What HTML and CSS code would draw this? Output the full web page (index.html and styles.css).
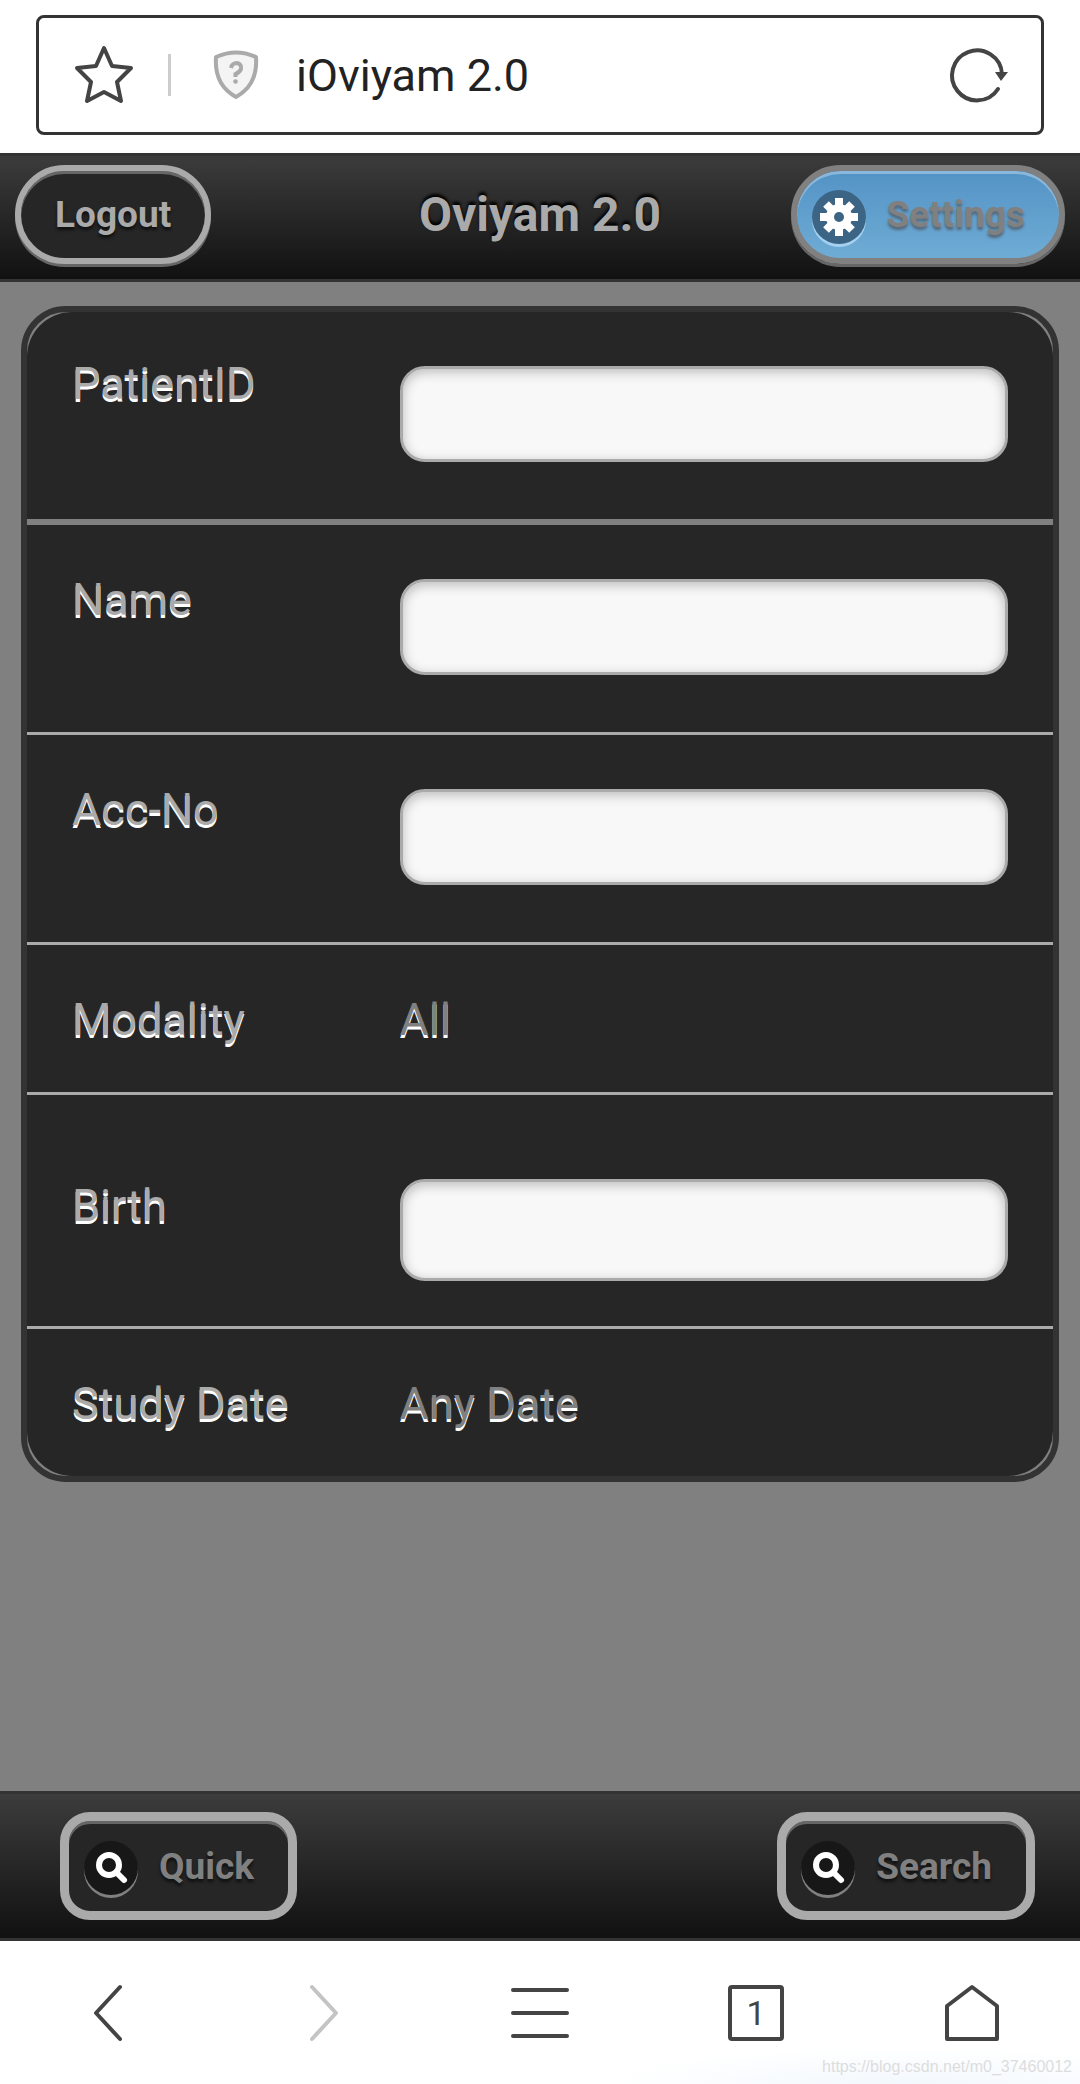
FILE: index.html
```
<!DOCTYPE html>
<html lang="en">
<head>
  <meta charset="UTF-8" />
  <meta name="viewport" content="width=device-width, initial-scale=1.0" />
  <title>iOviyam 2.0</title>
  <link rel="stylesheet" href="styles.css">
</head>
<body>

  <div class="browser-bar">
    <div class="address">
      <button type="button" class="icon-btn" aria-label="Bookmark">
        <svg width="58" height="60" viewBox="0 0 58 60" fill="none" stroke="#444" stroke-width="4" stroke-linejoin="round">
          <path d="M29 3 L37 21 L56 23 L42 37 L46 56 L29 47 L12 56 L16 37 L2 23 L21 21 Z" />
        </svg>
      </button>
      <span class="divider"></span>
      <svg class="shield" width="46" height="50" viewBox="0 0 46 50">
        <path d="M3 7 Q23 -2 43 7 Q45 35 23 47 Q1 35 3 7 Z" fill="#f4f4f4" stroke="#aaa" stroke-width="4" stroke-linejoin="round" />
        <path d="M18 18 Q19 13 24 13 Q29 14 28 19 Q27 22 22.500 24 V27" fill="none" stroke="#aaa" stroke-width="4" />
        <circle cx="22.500" cy="31.500" r="2.300" fill="#aaa" />
      </svg>
      <span class="page-title">iOviyam 2.0</span>
      <button type="button" class="icon-btn" aria-label="Reload">
        <svg width="58" height="56" viewBox="0 0 58 56">
          <path d="M48 42 A25 25 0 1 1 52 27" fill="none" stroke="#444" stroke-width="4" stroke-linecap="round" />
          <path d="M45 25 H58 L51 34 Z" fill="#444" />
        </svg>
      </button>
    </div>
  </div>

  <header class="toolbar">
    <button type="button" class="btn btn-round btn-logout">Logout</button>
    <h1>Oviyam 2.0</h1>
    <button type="button" class="btn btn-round btn-settings">
      <span class="badge">
        <svg width="38" height="38" viewBox="0 0 38 38">
          <g stroke="#fff" stroke-width="8">
            <path d="M19 0 V38 M0 19 H38 M6 6 L32 32 M32 6 L6 32" />
          </g>
          <circle cx="19" cy="19" r="13" fill="#fff" />
          <circle cx="19" cy="19" r="5" fill="#3c6484" />
        </svg>
      </span>
      Settings
    </button>
  </header>

  <main>
    <form class="panel" id="search-form">
      <div class="row row-first">
        <label for="patient-id">PatientID</label>
        <input type="text" id="patient-id" />
      </div>
      <div class="row">
        <label for="name">Name</label>
        <input type="text" id="name" />
      </div>
      <div class="row">
        <label for="acc-no">Acc-No</label>
        <input type="text" id="acc-no" />
      </div>
      <div class="row">
        <label for="modality">Modality</label>
        <select id="modality">
          <option>All</option>
        </select>
      </div>
      <div class="row row-birth">
        <label for="birth">Birth</label>
        <input type="text" id="birth" />
      </div>
      <div class="row row-last">
        <label for="study-date">Study Date</label>
        <select id="study-date">
          <option>Any Date</option>
        </select>
      </div>
    </form>
  </main>

  <footer class="toolbar toolbar-bottom">
    <button type="button" class="btn btn-square">
      <span class="badge">
        <svg width="36" height="36" viewBox="0 0 36 36" fill="none" stroke="#fff" stroke-linecap="round">
          <circle cx="16" cy="15" r="10" stroke-width="6" />
          <path d="M24 23 L31 30" stroke-width="6" />
        </svg>
      </span>
      Quick
    </button>
    <button type="submit" form="search-form" class="btn btn-square">
      <span class="badge">
        <svg width="36" height="36" viewBox="0 0 36 36" fill="none" stroke="#fff" stroke-linecap="round">
          <circle cx="16" cy="15" r="10" stroke-width="6" />
          <path d="M24 23 L31 30" stroke-width="6" />
        </svg>
      </span>
      Search
    </button>
  </footer>

  <nav class="browser-nav">
    <button type="button" class="icon-btn" aria-label="Back">
      <svg width="60" height="60" viewBox="0 0 60 60"><path d="M42 4 L18 30 L42 56" /></svg>
    </button>
    <button type="button" class="icon-btn" aria-label="Forward" disabled>
      <svg width="60" height="60" viewBox="0 0 60 60"><path d="M18 4 L42 30 L18 56" /></svg>
    </button>
    <button type="button" class="icon-btn" aria-label="Menu">
      <svg width="60" height="60" viewBox="0 0 60 60"><path d="M3 7 H57 M3 30 H57 M3 53 H57" /></svg>
    </button>
    <button type="button" class="icon-btn tab-count" aria-label="Tabs">1</button>
    <button type="button" class="icon-btn" aria-label="Home">
      <svg width="60" height="60" viewBox="0 0 60 60"><path d="M30 4 L55 23 V56 H5 V23 Z" /></svg>
    </button>
    <span class="watermark">https://blog.csdn.net/m0_37460012</span>
  </nav>

</body>
</html>
```
FILE: styles.css
```
* {
  box-sizing: border-box;
}

body {
  font-family: Roboto, sans-serif;
  margin: 0;
  min-height: 100vh;
  display: flex;
  flex-direction: column;
  background-color: #808080;
}

button {
  font-family: inherit;
  cursor: pointer;
}

.icon-btn {
  display: flex;
  padding: 0;
  border: 0;
  background: none;
}

.icon-btn svg {
  overflow: visible;
}

/* address bar */
.browser-bar {
  padding: 15px 36px 18px;
  background: #fff;
}

.address {
  display: flex;
  align-items: center;
  height: 120px;
  padding: 0 33px 0 36px;
  border: 3px solid #333;
  border-radius: 8px;
}

.divider {
  width: 3px;
  height: 42px;
  margin: 0 42px 0 35px;
  background: #ccc;
}

.page-title {
  flex: 1;
  margin-left: 37px;
  font-size: 45px;
  color: #222;
}

/* toolbars */
.toolbar {
  display: grid;
  grid-template-columns: 1fr auto 1fr;
  align-items: center;
  padding: 9px 15px 15px;
  border-top: 3px solid #333;
  border-bottom: 3px solid #333;
  background: linear-gradient(#3c3c3c, #111);
}

.toolbar h1 {
  margin: 0;
  font-size: 48px;
  line-height: 56px;
  color: #aaa;
  text-shadow: 0 -3px 3px #000;
}

.toolbar-bottom {
  display: flex;
  justify-content: space-between;
  padding: 18px 45px 18px 60px;
}

.btn {
  display: flex;
  align-items: center;
  font-size: 37px;
  font-weight: bold;
  color: #808080;
  background: #262626;
  border: 9px solid #aaa;
  text-shadow: 0 3px 3px #111;
  box-shadow: inset 0 3px 0 #666;
}

.btn-round {
  height: 99px;
  border-width: 6px;
  border-radius: 50px;
}

.btn-logout {
  justify-self: start;
  padding: 0 34px;
  color: #aaa;
  box-shadow: inset 0 3px 0 #666, 0 3px 0 #666;
}

.btn-settings {
  justify-self: end;
  padding: 0 34px 0 15px;
  background: linear-gradient(#5393c5, #6facd5);
  border-color: #808080;
  text-shadow: 0 3px 3px #567;
  box-shadow: inset 0 3px 0 #8ab8dd, 0 3px 0 #666;
}

.btn-square {
  height: 108px;
  padding: 0 34px 0 15px;
  border-radius: 30px;
}

.badge {
  display: flex;
  align-items: center;
  justify-content: center;
  width: 54px;
  height: 54px;
  margin: 4px 21px 0 0;
  border-radius: 50%;
  background: #171717;
  box-shadow: 0 3px 0 #808080;
}

.btn-settings .badge {
  background: #3c6484;
  box-shadow: 0 3px 0 #a5d0f0;
}

/* search form */
main {
  flex: 1;
  padding: 24px 21px;
}

.panel {
  border: 6px solid #333;
  border-radius: 45px;
  background: #808080;
}

.row {
  display: flex;
  align-items: flex-start;
  padding: 48px 45px 45px;
  background: #262626;
  border-bottom: 3px solid #aaa;
}

.row-first {
  padding: 45px;
  border-bottom: 6px solid #808080;
  border-radius: 45px 45px 0 0;
}

.row-last {
  border-bottom: 0;
  border-radius: 0 0 45px 45px;
}

.row label {
  width: 35%;
  font-size: 45px;
  line-height: 54px;
  color: #aaa;
  text-shadow: 0 3px 0 #fff;
}

.row input {
  flex: 1;
  min-width: 0;
  height: 96px;
  margin: 6px 0 12px;
  padding: 0 18px;
  font-family: inherit;
  font-size: 45px;
  color: #333;
  background: #f8f8f8;
  border: 3px solid #aaa;
  border-radius: 25px;
  box-shadow: inset 0 3px 12px rgba(0, 0, 0, 0.25);
}

.row-first input {
  margin: 9px 0 12px;
}

.row select {
  flex: 1;
  height: 54px;
  padding: 0;
  border: 0;
  appearance: none;
  background: none;
  font-family: inherit;
  font-size: 45px;
  line-height: 54px;
  color: #808080;
  text-shadow: 0 3px 0 #fff;
}

.row-birth {
  padding: 84px 45px 45px;
}

.row-birth input {
  height: 102px;
  margin: 0;
}

/* bottom navigation */
.browser-nav {
  position: relative;
  display: grid;
  grid-template-columns: repeat(5, 1fr);
  place-items: center;
  height: 143px;
  background: radial-gradient(ellipse 300px 36px at 84% 100%, #f2f8fd, #fff);
}

.browser-nav svg {
  fill: none;
  stroke: #444;
  stroke-width: 4;
  stroke-linecap: round;
  stroke-linejoin: round;
}

.browser-nav button:disabled svg {
  stroke: #c4c4c4;
}

.tab-count {
  align-items: center;
  justify-content: center;
  width: 56px;
  height: 56px;
  border: 4px solid #444;
  border-radius: 4px;
  font-size: 34px;
  color: #444;
}

.watermark {
  position: absolute;
  right: 8px;
  bottom: 8px;
  font-family: "Liberation Sans", Arial, sans-serif;
  font-size: 16px;
  color: #ddd;
}
```
